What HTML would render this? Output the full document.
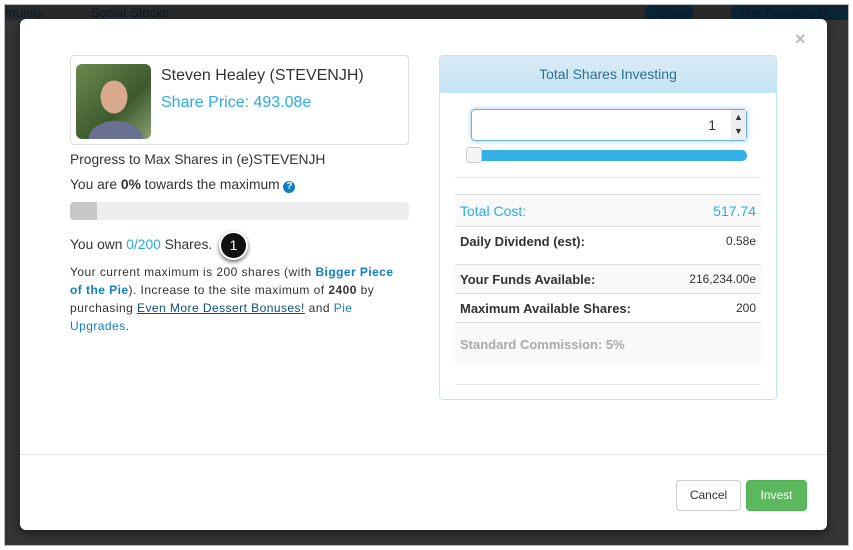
<!DOCTYPE html>
<html><head><meta charset="utf-8"><style>
*{box-sizing:border-box;margin:0;padding:0}
body{width:853px;height:550px;background:#fff;font-family:"Liberation Sans",Arial,sans-serif;position:relative;overflow:hidden}
.frame{position:absolute;left:4px;top:4px;width:845px;height:542px;background:#343434;border:1px solid #bbb;overflow:hidden}
.nav{position:absolute;top:0;left:0;right:0;height:15px;background:#2a2a2a;color:#0c1a26;font-size:13px}
.nav span{position:absolute;top:0}
.modal{position:absolute;left:20px;top:19px;width:807px;height:511px;background:#fff;border-radius:6px;box-shadow:0 3px 9px rgba(0,0,0,.5)}
.close{position:absolute;left:775px;top:10px;color:#bbb;font-size:18px;font-weight:bold}
.card{position:absolute;left:50px;top:36px;width:339px;height:90px;border:1px solid #ddd;border-radius:4px}
.photo{position:absolute;left:5px;top:8px;width:75px;height:75px;border-radius:6px;background:radial-gradient(ellipse 22px 27px at 38px 33px,#d9a98e 60%,transparent 62%),radial-gradient(ellipse 30px 20px at 40px 75px,#6a7090 90%,transparent 92%),linear-gradient(135deg,#6d8a4e,#3c5a2c 60%,#8aa070)}
.name{position:absolute;left:90px;top:11px;font-size:16px;color:#333}
.price{position:absolute;left:90px;top:38px;font-size:16px;color:#2aabe4}
.t{position:absolute;font-size:13.8px;color:#333;white-space:nowrap}
.bar{position:absolute;left:50px;top:183px;width:339px;height:18px;background:#eee;border-radius:4px;overflow:hidden}
.bar div{width:27px;height:18px;background:#c8c8c8}
.small{position:absolute;left:50px;top:244px;width:360px;font-size:12px;letter-spacing:.45px;line-height:18px;color:#333;white-space:nowrap}
a{color:#0f7fc4;text-decoration:none}
.b{font-weight:bold}
.badge{position:absolute;left:199px;top:212px;width:29px;height:29px;border-radius:50%;background:#111;color:#fff;font-size:14px;text-align:center;line-height:25px;box-shadow:0 2px 4px rgba(0,0,0,.6);border:2px solid #fff}
.panel{position:absolute;left:419px;top:36px;width:338px;height:345px;border:1px solid #bce8f1;border-radius:4px}
.ph{height:37px;background:linear-gradient(#d9edf7,#c4e3f3);color:#31708f;font-size:14px;text-align:center;line-height:37px;border-bottom:1px solid #bce8f1}
.inp{position:absolute;left:31px;top:53px;width:276px;height:32px;border:1px solid #66afe9;border-radius:4px;box-shadow:0 0 6px rgba(102,175,233,.6);font-size:14px;text-align:right;padding:7px 30px 0 0;color:#333}
.spin{position:absolute;right:0;top:0;width:15px;height:30px;background:#eee;font-size:9px;text-align:center;line-height:14px;color:#333}
.slider{position:absolute;left:27px;top:94px;width:280px;height:11px;background:#35b0e6;border-radius:5px}
.knob{position:absolute;left:-1px;top:-3px;width:16px;height:16px;background:#f5f5f5;border:1px solid #ccc;border-radius:3px}
.hr{position:absolute;left:15px;width:306px;border-top:1px solid #e5e5e5}
.row{position:absolute;left:15px;width:306px;border-top:1px solid #ddd;font-size:13px;color:#333;padding:0 5px}
.row span{position:absolute}
.footer{position:absolute;left:0;right:0;top:435px;border-top:1px solid #e5e5e5}
.btn{position:absolute;top:461px;height:31px;border-radius:4px;font-size:12px;line-height:29px;text-align:center}
</style></head><body>
<div class="frame">
 <div class="nav"><span style="left:0">munity</span><span style="left:86px">Social Stocks</span>
 <span style="left:640px;width:48px;height:15px;background:#0a2538;border-radius:6px;padding-left:14px">Shop</span>
 <span style="left:726px;width:130px;height:15px;background:#0a2538;border-radius:6px;padding-left:8px">The People's M</span></div>
</div>
<div class="modal">
 <div class="close">×</div>
 <div class="card"><div class="photo"></div><div class="name">Steven Healey (STEVENJH)</div><div class="price">Share Price: 493.08e</div></div>
 <div class="t" style="left:50px;top:133px">Progress to Max Shares in (e)STEVENJH</div>
 <div class="t" style="left:50px;top:158px">You are <b>0%</b> towards the maximum <span style="display:inline-block;width:12px;height:12px;border-radius:50%;background:#0f7fc4;color:#fff;font-size:10px;font-weight:bold;text-align:center;line-height:12px">?</span></div>
 <div class="bar"><div></div></div>
 <div class="t" style="left:50px;top:218px">You own <a style="color:#2aabe4">0/200</a> Shares.</div>
 <div class="badge">1</div>
 <div class="small">Your current maximum is 200 shares (with <a class="b">Bigger Piece</a><br><a class="b">of the Pie</a>). Increase to the site maximum of <b>2400</b> by<br>purchasing <a style="color:#0a4f7a;text-decoration:underline">Even More Dessert Bonuses!</a> and <a>Pie</a><br><a>Upgrades</a>.</div>
 <div class="panel">
  <div class="ph">Total Shares Investing</div>
  <div class="inp">1<div class="spin">▲<br>▼</div></div>
  <div class="slider"><div class="knob"></div></div>
  <div class="hr" style="top:121px"></div>
  <div class="row" style="top:138px;height:32px;background:#f9f9f9;color:#2aabe4;font-size:14px"><span style="left:5px;top:8px">Total Cost:</span><span style="right:5px;top:8px">517.74</span></div>
  <div class="row" style="top:170px;height:38px"><span class="b" style="left:5px;top:7px">Daily Dividend (est):</span><span style="right:5px;top:7px;font-size:12px">0.58e</span></div>
  <div class="row" style="top:208px;height:29px;background:#f9f9f9"><span class="b" style="left:5px;top:7px">Your Funds Available:</span><span style="right:5px;top:7px;font-size:12px">216,234.00e</span></div>
  <div class="row" style="top:237px;height:29px"><span class="b" style="left:5px;top:7px">Maximum Available Shares:</span><span style="right:5px;top:7px;font-size:12px">200</span></div>
  <div class="row" style="top:266px;height:44px;background:#f9f9f9;color:#aaa"><span class="b" style="left:5px;top:14px">Standard Commission: 5%</span></div>
  <div class="hr" style="top:328px"></div>
 </div>
 <div class="footer"></div>
 <div class="btn" style="left:656px;width:65px;border:1px solid #ccc;color:#333">Cancel</div>
 <div class="btn" style="left:726px;width:61px;background:#5cb85c;border:1px solid #4cae4c;color:#fff">Invest</div>
</div>
</body></html>
